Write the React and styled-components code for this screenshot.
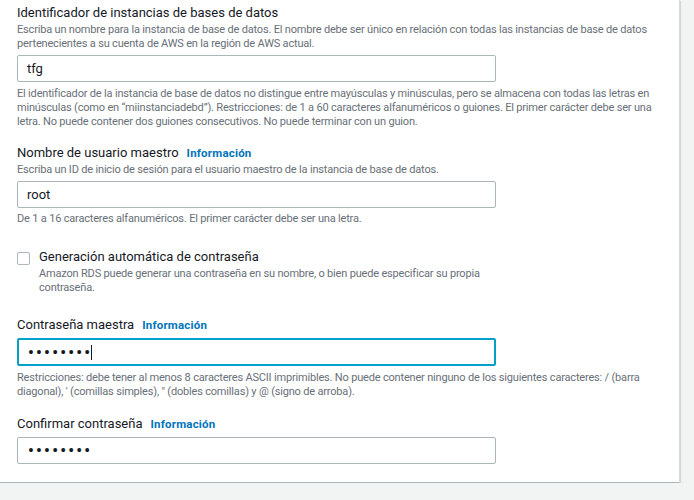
import React from "react";
import styled, { createGlobalStyle } from "styled-components";

const GlobalStyle = createGlobalStyle`
  html, body {
    margin: 0;
    padding: 0;
    background: #f2f3f3;
    font-family: Roboto, "Liberation Sans", Arial, sans-serif;
    color: #16191f;
  }
`;

const Card = styled.div`
  width: 680px;
  background: #ffffff;
  border-right: 1px solid #d5dbdb;
  border-bottom: 1px solid #aab7b8;
  box-shadow: 1px 1px 1px 0 rgba(0, 28, 36, 0.12);
  padding: 4px 17px 18px 17px;
  box-sizing: border-box;
`;

const Field = styled.div`
  margin-top: ${(p) => p.$top || 0}px;
`;

const LabelRow = styled.div`
  display: flex;
  align-items: baseline;
  gap: 8px;
  font-size: 13px;
  line-height: 18px;
  color: #16191f;
`;

const InfoLink = styled.a`
  font-size: 11.5px;
  font-weight: 700;
  letter-spacing: 0.2px;
  color: #0073bb;
  text-decoration: none;
`;

const Description = styled.div`
  font-size: 11px;
  line-height: 14px;
  letter-spacing: -0.18px;
  color: #687078;
  margin-top: 1px;
  max-width: ${(p) => (p.$width ? `${p.$width}px` : "none")};
`;

const Hint = styled.div`
  font-size: 11px;
  line-height: 14px;
  letter-spacing: -0.18px;
  color: #687078;
  margin-top: ${(p) => p.$top || 5}px;
`;

const InputBox = styled.div`
  width: 479px;
  height: ${(p) => (p.$focused ? 28 : 27)}px;
  box-sizing: border-box;
  margin-top: 4px;
  display: flex;
  align-items: center;
  padding: 0 ${(p) => (p.$focused ? 8 : 9)}px;
  border: ${(p) => (p.$focused ? "2px solid #00a1c9" : "1px solid #aab7b8")};
  border-radius: 2px;
  font-size: 13px;
  color: #16191f;
  background: #fff;
`;

const Dots = styled.span`
  font-size: 16px;
  letter-spacing: 2.3px;
  font-weight: 700;
  color: #16191f;
  margin-left: 1px;
`;

const Caret = styled.span`
  display: inline-block;
  width: 1px;
  height: 15px;
  margin-left: -1px;
  background: #16191f;
`;

const CheckRow = styled.div`
  display: flex;
  gap: 9px;
  margin-top: ${(p) => p.$top || 0}px;
`;

const CheckBox = styled.span`
  flex: none;
  width: 13px;
  height: 13px;
  margin-top: 4px;
  box-sizing: border-box;
  border: 1px solid #aab7b8;
  border-radius: 2px;
  background: #fff;
`;

const CheckText = styled.div`
  display: flex;
  flex-direction: column;
`;

const Password = ({ focused }) => (
  <InputBox $focused={focused}>
    <Dots>••••••••</Dots>
    {focused && <Caret />}
  </InputBox>
);

export default function App() {
  return (
    <>
      <GlobalStyle />
      <Card>
        <Field>
          <LabelRow>Identificador de instancias de bases de datos</LabelRow>
          <Description>
            Escriba un nombre para la instancia de base de datos. El nombre debe ser único en relación con todas las instancias de base de datos pertenecientes a su cuenta de AWS en la región de AWS actual.
          </Description>
          <InputBox>tfg</InputBox>
          <Hint>
            El identificador de la instancia de base de datos no distingue entre mayúsculas y minúsculas, pero se almacena con todas las letras en minúsculas (como en “miinstanciadebd”). Restricciones: de 1 a 60 caracteres alfanuméricos o guiones. El primer carácter debe ser una letra. No puede contener dos guiones consecutivos. No puede terminar con un guion.
          </Hint>
        </Field>

        <Field $top={15}>
          <LabelRow>
            Nombre de usuario maestro <InfoLink href="#">Información</InfoLink>
          </LabelRow>
          <Description>
            Escriba un ID de inicio de sesión para el usuario maestro de la instancia de base de datos.
          </Description>
          <InputBox>root</InputBox>
          <Hint $top={4}>
            De 1 a 16 caracteres alfanuméricos. El primer carácter debe ser una letra.
          </Hint>
        </Field>

        <CheckRow $top={22}>
          <CheckBox />
          <CheckText>
            <LabelRow>Generación automática de contraseña</LabelRow>
            <Description $width={465}>
              Amazon RDS puede generar una contraseña en su nombre, o bien puede especificar su propia contraseña.
            </Description>
          </CheckText>
        </CheckRow>

        <Field $top={21}>
          <LabelRow>
            Contraseña maestra <InfoLink href="#">Información</InfoLink>
          </LabelRow>
          <Password focused />
          <Hint $top={5}>
            Restricciones: debe tener al menos 8 caracteres ASCII imprimibles. No puede contener ninguno de los siguientes caracteres: / (barra diagonal), ' (comillas simples), " (dobles comillas) y @ (signo de arroba).
          </Hint>
        </Field>

        <Field $top={16}>
          <LabelRow>
            Confirmar contraseña <InfoLink href="#">Información</InfoLink>
          </LabelRow>
          <Password />
        </Field>
      </Card>
    </>
  );
}
